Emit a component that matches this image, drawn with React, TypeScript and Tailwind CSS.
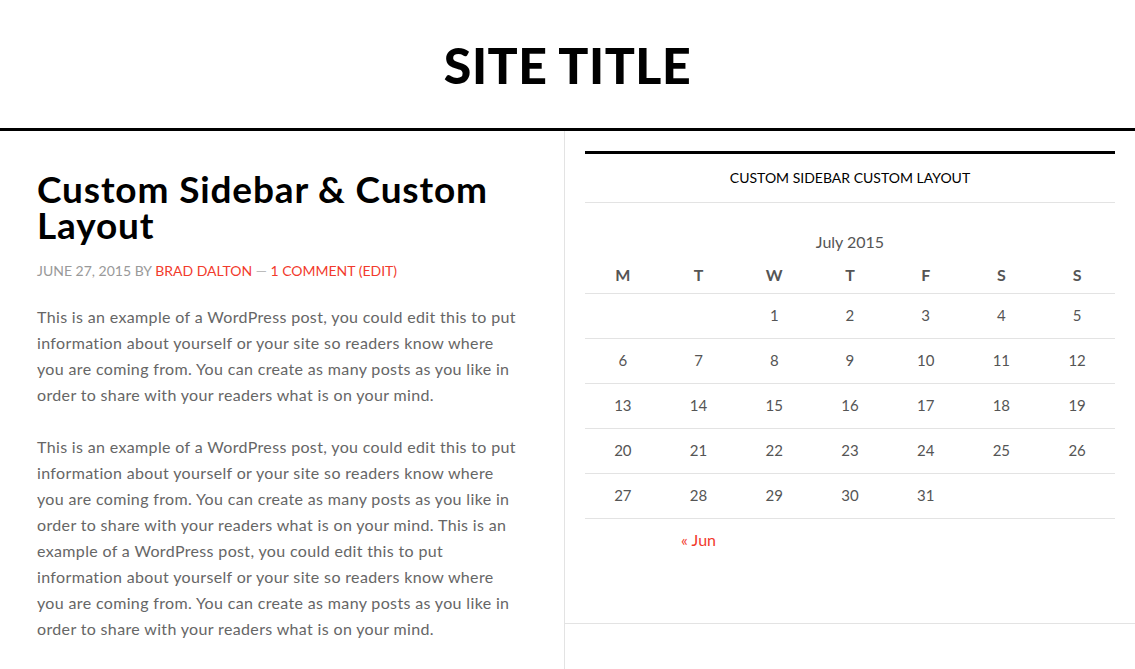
export default function App() {
  const weeks: (number | null)[][] = [
    [null, null, 1, 2, 3, 4, 5],
    [6, 7, 8, 9, 10, 11, 12],
    [13, 14, 15, 16, 17, 18, 19],
    [20, 21, 22, 23, 24, 25, 26],
    [27, 28, 29, 30, 31, null, null],
  ];
  const days = ["M", "T", "W", "T", "F", "S", "S"];
  const para1 =
    "This is an example of a WordPress post, you could edit this to put information about yourself or your site so readers know where you are coming from. You can create as many posts as you like in order to share with your readers what is on your mind.";

  return (
    <div className="min-h-screen bg-white font-['Lato','Open_Sans',sans-serif] text-[#666]">
      {/* Header */}
      <header className="flex h-[131px] items-center justify-center border-b-[3px] border-black">
        <h1 className="pt-[2px] text-[50px] font-black tracking-[0.5px] text-black">SITE TITLE</h1>
      </header>

      <div className="flex">
        {/* Content */}
        <main className="w-[565px] shrink-0 border-r border-[#e3e3e3] pl-[37px] pr-[45px] pt-[40px] pb-[40px]">
          <h2 className="text-[37px] font-bold leading-[36px] tracking-[0.85px] text-black">
            Custom Sidebar &amp; Custom Layout
          </h2>
          <p className="mt-[17px] whitespace-nowrap text-[14px] uppercase text-[#999]">
            June 27, 2015 by <span className="text-[#f23a2c]">Brad Dalton</span>{" "}
            <span className="text-[#bbb]">—</span>{" "}
            <span className="text-[#f23a2c]">1 Comment</span>{" "}
            <span className="text-[#f23a2c]">(Edit)</span>
          </p>
          <div className="mt-[23px] text-[16px] leading-[26px] tracking-[0.35px] text-[#666]">
            <p className="mb-[26px]">{para1}</p>
            <p>
              {para1} This is an example of a WordPress post, you could edit this to put information
              about yourself or your site so readers know where you are coming from. You can create as
              many posts as you like in order to share with your readers what is on your mind.
            </p>
          </div>
        </main>

        {/* Sidebar */}
        <aside className="flex-1">
          <section className="border-b border-[#e3e3e3] px-[20px] pt-[20px] pb-[61px]">
            <div className="border-t-[3px] border-black">
              <h4 className="border-b border-[#e3e3e3] pt-[13px] pb-[14px] text-center text-[14px] uppercase text-black">
                Custom Sidebar Custom Layout
              </h4>
              <table className="mt-[27px] w-full table-fixed border-collapse text-center text-[16px] text-[#555]">
                <caption className="pb-[3px] text-[16px] text-[#555]">July 2015</caption>
                <thead>
                  <tr className="border-b border-[#e3e3e3]">
                    {days.map((d, i) => (
                      <th key={i} className="h-[36px] font-bold">
                        {d}
                      </th>
                    ))}
                  </tr>
                </thead>
                <tbody>
                  {weeks.map((w, i) => (
                    <tr key={i} className="border-b border-[#e3e3e3]">
                      {w.map((d, j) => (
                        <td key={j} className="h-[45px] text-[15px]">
                          {d ?? ""}
                        </td>
                      ))}
                    </tr>
                  ))}
                </tbody>
                <tfoot>
                  <tr>
                    <td colSpan={3} className="h-[44px] text-[#f23a2c]">
                      « Jun
                    </td>
                    <td colSpan={4}></td>
                  </tr>
                </tfoot>
              </table>
            </div>
          </section>
        </aside>
      </div>
    </div>
  );
}
